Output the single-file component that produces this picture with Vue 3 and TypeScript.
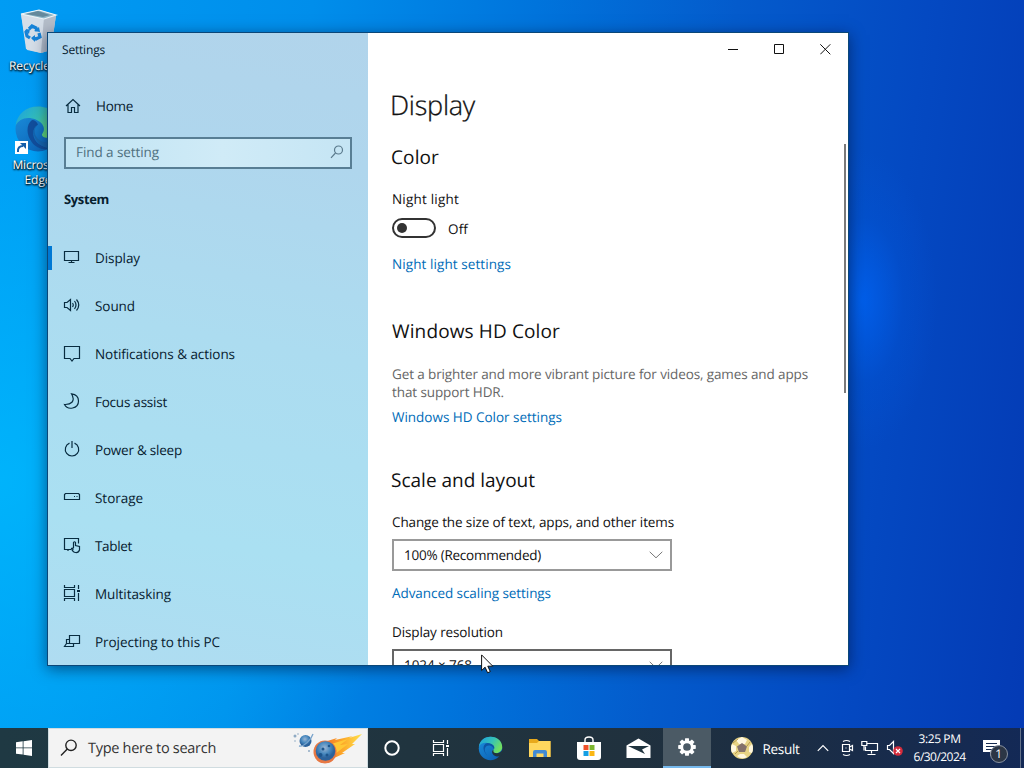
<script setup lang="ts">
interface NavItem {
  id: string
  label: string
  width: number
}

const navItems: NavItem[] = [
  { id: 'display', label: 'Display', width: 45 },
  { id: 'sound', label: 'Sound', width: 40 },
  { id: 'notifications', label: 'Notifications & actions', width: 140 },
  { id: 'focus', label: 'Focus assist', width: 72 },
  { id: 'power', label: 'Power & sleep', width: 87 },
  { id: 'storage', label: 'Storage', width: 48 },
  { id: 'tablet', label: 'Tablet', width: 37 },
  { id: 'multitasking', label: 'Multitasking', width: 76 },
  { id: 'projecting', label: 'Projecting to this PC', width: 125 },
]

// Tracks a single-line label in or out until it fills its design width.
const vFit = {
  mounted(el: HTMLElement, binding: { value: number }) {
    const natural = el.getBoundingClientRect().width
    const count = (el.textContent ?? '').trim().length
    el.style.letterSpacing = `${(binding.value - natural) / count}px`
  },
}
</script>

<template>
  <div class="desktop">
    <div class="shortcut bin">
      <svg width="48" height="48" viewBox="0 0 48 48">
        <path d="M9 6 28 2 44 7 39 42 29 45 15 42Z" fill="#c9d7e2" />
        <path d="M9 6 32 10 29 45 14 41Z" fill="#d5dee8" />
        <path d="M32 10 44 7 39 42 29 45Z" fill="#b4bdc9" />
        <path d="M9 6 27 2 44 7 32 11Z" fill="#8eb6c8" stroke="#eef5f8" stroke-width="1.2" />
        <path d="m14 6 12-3 12 4-7 2Z" fill="#64899c" />
        <path d="m17 21 3-3 4 2 1 3M27 25l1 4-4 2-3-1M18 30l-3-2-1-4 2-2" fill="none" stroke="#1683d8" stroke-width="3.2" />
        <path d="m22 23 6 1-1-5ZM23 27l-4 3 4 4ZM13 22l5-1-1 5Z" fill="#1683d8" />
      </svg>
      <span v-fit="62">Recycle Bin</span>
    </div>
    <div class="shortcut edge">
      <svg width="48" height="48" viewBox="0 0 32 32">
        <defs>
          <linearGradient id="edge-top" x1="0" y1="0" x2="1" y2="0.5">
            <stop offset="0" stop-color="#1a9fe0" /><stop offset="0.55" stop-color="#35c1b9" /><stop offset="1" stop-color="#70df61" />
          </linearGradient>
          <linearGradient id="edge-body" x1="0" y1="0" x2="0.7" y2="1">
            <stop offset="0" stop-color="#1c91de" /><stop offset="1" stop-color="#0c62b5" />
          </linearGradient>
        </defs>
        <circle cx="16" cy="16" r="15" fill="url(#edge-body)" />
        <path d="M1 14C2 6 8 1 16 1c9 0 15 6 15 13 0 5-4 8-8 8-4 0-5-2-4-3 3-4-1-9-7-10C7 8 3 10 1 14Z" fill="url(#edge-top)" />
        <path d="M12 10c-4 3-4 10 0 15 3 4 9 6 13 3-8 1-13-5-12-10 0-3 2-4 3-5-1-2-2-3-4-3Z" fill="#114e9c" />
        <path d="M16 13c-5 4-1 12 6 12 3 0 6-1 8-2-1 3-3 5-5 6-5 0-11-4-12-10 0-3 1-5 3-6Z" fill="#1565ae" />
      </svg>
      <svg class="arrow-badge" width="13" height="13" viewBox="0 0 13 13">
        <path d="M0 0h13v13H0z" fill="#fff" />
        <path d="M3 11c-.5-4 1.500-6 5-6" fill="none" stroke="#155da8" stroke-width="2" />
        <path d="M5 2h6v6Z" fill="#155da8" />
      </svg>
      <span v-fit="51">Microsoft</span>
      <span v-fit="27">Edge</span>
    </div>

    <section class="window">
      <aside class="sidebar">
        <div class="window-title"><span v-fit="43">Settings</span></div>
        <div class="home">
          <svg class="icon" width="16" height="16" viewBox="0 0 16 16">
            <path d="M1 8 8 1.500 15 8M3 6.500v8h3.500v-5h3v5H13v-8" />
          </svg>
          <span v-fit="37">Home</span>
        </div>
        <div class="find">
          <span v-fit="83">Find a setting</span>
          <svg class="icon" width="14" height="14" viewBox="0 0 14 14">
            <circle cx="8.500" cy="5" r="4" /><path d="M5.500 8 1 12.800" />
          </svg>
        </div>
        <div class="category"><span v-fit="45">System</span></div>
        <nav>
          <div v-for="item in navItems" :key="item.id" class="nav-item" :class="{ active: item.id === 'display' }">
            <svg class="icon" width="18" height="18" viewBox="0 0 18 18">
              <path v-if="item.id === 'display'" d="M1.500 3.500h14v9h-14zM8.500 12.500v2M5.500 14.500h6" />
              <g v-else-if="item.id === 'sound'">
                <path d="M1.500 6.500H4l3.500-3v11L4 11.500H1.500zM9.500 7q1.500 2 0 4M11.500 5q3 4 0 8M13.500 3.500q4.500 5.500 0 11" />
              </g>
              <path v-else-if="item.id === 'notifications'" d="M1.500 2.500h15v12H11L9 17l-2-2.500H1.500z" />
              <path v-else-if="item.id === 'focus'" d="M8.500 1.800c4.500 8-1 11-7 10.700 3 6 14 4.500 14-3.500 0-4-3-6.700-7-7.200Z" />
              <path v-else-if="item.id === 'power'" d="M9 1v7M6.500 3.100a6.700 6.700 0 1 0 5 0" />
              <path v-else-if="item.id === 'storage'" d="M2.500 5.500h13l1 1v5h-15v-5zM11 8.500h1M13.500 8.500h1" />
              <g v-else-if="item.id === 'tablet'">
                <path d="M8 13.500H1.500v-11h14v5M5 13.500v1.500" />
                <path d="M10.500 12V6.500q1-1.500 2 0v3l4 1v3.500q-1 3-4 2.500-2.500 0-4-4 1-1 2 1" />
              </g>
              <g v-else-if="item.id === 'multitasking'">
                <path d="M1.500 1v2.500h10V1M1.500 5.500h10v7h-10zM1.500 17v-2.500h10V17M15.500 1v4M15.500 9v8" />
                <path d="M14 6h3v2h-3z" class="solid" />
              </g>
              <path v-else d="M6.500 3.500h10v8h-10zM6.500 7.500h-3v4h7M3.500 11.500l-2 3h9v-3" />
            </svg>
            <span v-fit="item.width">{{ item.label }}</span>
          </div>
        </nav>
      </aside>

      <main class="content">
        <div class="window-controls">
          <svg width="11" height="11" viewBox="0 0 11 11"><path d="M0 5.500h10" /></svg>
          <svg width="11" height="11" viewBox="0 0 11 11"><path d="M.5.5h9v9h-9z" /></svg>
          <svg width="11" height="11" viewBox="0 0 11 11"><path d="m.3.300 10 10M10.300.300l-10 10" /></svg>
        </div>
        <div class="page">
          <h1><span v-fit="85">Display</span></h1>
          <h2 class="color"><span v-fit="48">Color</span></h2>
          <p class="label-night"><span v-fit="67">Night light</span></p>
          <div class="switch-row">
            <div class="switch"><i></i></div>
            <span v-fit="20">Off</span>
          </div>
          <p class="link link-night"><span v-fit="119">Night light settings</span></p>
          <h2 class="hd"><span v-fit="168">Windows HD Color</span></h2>
          <p class="muted"><span v-fit="416">Get a brighter and more vibrant picture for videos, games and apps</span></p>
          <p class="muted"><span v-fit="112">that support HDR.</span></p>
          <p class="link link-hd"><span v-fit="170">Windows HD Color settings</span></p>
          <h2 class="scale"><span v-fit="144">Scale and layout</span></h2>
          <p class="label-size"><span v-fit="282">Change the size of text, apps, and other items</span></p>
          <div class="select">
            <span v-fit="137">100% (Recommended)</span>
            <svg width="14" height="8" viewBox="0 0 14 8"><path d="m.7.800 6.300 6 6.300-6" /></svg>
          </div>
          <p class="link link-scaling"><span v-fit="159">Advanced scaling settings</span></p>
          <p class="label-resolution"><span v-fit="111">Display resolution</span></p>
          <div class="select focused">
            <span v-fit="68">1024 × 768</span>
            <svg width="14" height="8" viewBox="0 0 14 8"><path d="m.7.800 6.300 6 6.300-6" /></svg>
          </div>
        </div>
        <div class="scrollbar"></div>
      </main>
    </section>

    <svg class="cursor" width="13" height="20" viewBox="0 0 13 20">
      <path d="M.6.900v15.600l3.500-3.300 2.500 5.600 2.700-1.200-2.500-5.400h5Z" fill="#fff" stroke="#111" />
    </svg>

    <footer class="taskbar">
      <div class="start">
        <svg width="16" height="16" viewBox="0 0 16 16">
          <path d="M0 2.300 6.700 1.300v6.200H0zM7.500 1.200 16 0v7.500H7.500zM0 8.300h6.700v6.300L0 13.700zM7.500 8.300H16V16l-8.500-1.200z" fill="#fff" />
        </svg>
      </div>
      <div class="search">
        <svg width="18" height="18" viewBox="0 0 18 18">
          <circle cx="11" cy="6.300" r="5.200" fill="none" stroke="#222" stroke-width="1.400" /><path d="M7.300 10 1 16.500" stroke="#222" stroke-width="1.400" />
        </svg>
        <span v-fit="128">Type here to search</span>
        <svg class="comet" width="74" height="38" viewBox="0 0 74 38">
          <defs>
            <linearGradient id="flame" x1="0" x2="1"><stop offset="0" stop-color="#ef6a2b" /><stop offset="0.500" stop-color="#fca528" /><stop offset="1" stop-color="#ffe34d" /></linearGradient>
            <radialGradient id="rock" cx=".45" cy=".35"><stop offset="0" stop-color="#9bb6d4" /><stop offset="0.600" stop-color="#4788be" /><stop offset="1" stop-color="#2c629b" /></radialGradient>
          </defs>
          <path d="M28 14 44 9l-2 2 18-4-4 2 13-4-10 10 3 0-13 9 3 0-13 6-8 4Z" fill="url(#flame)" />
          <path d="m38 15 17-5-8 6 8-1-13 10Z" fill="#ffc735" />
          <circle cx="32" cy="23" r="11.500" fill="#e77843" />
          <circle cx="32.500" cy="22" r="9.800" fill="url(#rock)" />
          <g fill="#1e568d"><circle cx="27.500" cy="26" r="2" /><circle cx="34" cy="26" r="1.500" /><circle cx="30" cy="20" r="1.500" /><circle cx="36" cy="17" r="1.300" /></g>
          <circle cx="12.500" cy="12" r="6" fill="url(#rock)" />
          <path d="M6 17C11 18 18 11 20 5" fill="none" stroke="#7aa4cb" stroke-width="1.300" />
          <g fill="#8faac3"><circle cx="2" cy="7" r="1.500" /><circle cx="5" cy="5" r=".8" /><circle cx="2" cy="12" r=".8" /><circle cx="16" cy="22" r="1" /></g>
        </svg>
      </div>
      <div class="task">
        <svg width="18" height="18" viewBox="0 0 18 18"><circle cx="9" cy="9" r="6.700" fill="none" stroke="#fff" stroke-width="2" /></svg>
      </div>
      <div class="task">
        <svg class="icon light" width="18" height="18" viewBox="0 0 18 18">
          <path d="M1.500 1v2.500h10V1M1.500 5.500h10v7h-10zM1.500 17v-2.500h10V17M15.500 1v4M15.500 9v8" />
          <path d="M14 6h3v2h-3z" class="solid" />
        </svg>
      </div>
      <div class="task">
        <svg width="25" height="25" viewBox="0 0 32 32">
          <circle cx="16" cy="16" r="15" fill="url(#edge-body)" />
          <path d="M1 14C2 6 8 1 16 1c9 0 15 6 15 13 0 5-4 8-8 8-4 0-5-2-4-3 3-4-1-9-7-10C7 8 3 10 1 14Z" fill="url(#edge-top)" />
          <path d="M20 18c3-4-1-9-8-9-8 2-5 12 0 16-6-7-3-13 2-13 3 0 6 2 6 6Z" fill="#0d56a6" />
          <path d="M20 18c-1 3 1 4 4 4 3 0 5-1 7-4v5l-1 2c-5 3-12 0-12-5 0-1 1-2 2-2Z" fill="#20343f" />
        </svg>
      </div>
      <div class="task">
        <svg width="22" height="20" viewBox="0 0 22 20">
          <path d="M0 1h8l2 2h11.500v16H0z" fill="#e8a91c" />
          <path d="M0 5h8l2-2h11.500v16H0z" fill="#ffd75e" />
          <path d="M4 19v-5q0-2 2-2h10q2 0 2 2v5h-3.500v-3.500h-7V19z" fill="#438bd3" />
        </svg>
      </div>
      <div class="task">
        <svg width="24" height="25" viewBox="0 0 24 25">
          <path d="M8 7V4q0-3 4-3t4 3v3" fill="none" stroke="#fff" stroke-width="1.400" />
          <path d="M0 6h24v15q0 3-3 3H3q-3 0-3-3z" fill="#fff" />
          <path d="M6.500 9h5v5h-5z" fill="#f0512a" /><path d="M12.500 9h5v5h-5z" fill="#7db72f" />
          <path d="M6.500 15h5v5h-5z" fill="#159fe4" /><path d="M12.500 15h5v5h-5z" fill="#fbb713" />
        </svg>
      </div>
      <div class="task">
        <svg width="25" height="21" viewBox="0 0 25 21">
          <path d="M.5 7.500 12.500.500l12 7V20H.5z" fill="#fff" /><path d="M2 8h21l-7 3.500 3 4.500Z" fill="#20343f" />
        </svg>
      </div>
      <div class="task current">
        <svg width="20" height="20" viewBox="0 0 20 20">
          <g fill="#fff"><path v-for="n in 8" :key="n" d="M8.200 1.200h3.600l.6 4H7.600z" :transform="`rotate(${n * 45} 10 10)`" /></g>
          <circle cx="10" cy="10" r="5.200" fill="none" stroke="#fff" stroke-width="2.700" />
        </svg>
      </div>
      <div class="news">
        <svg width="24" height="24" viewBox="0 0 24 24">
          <circle cx="12" cy="12" r="11" fill="#e7d385" />
          <path d="m12 1 5 3-2 4H9L6 4ZM2 8l4 2v5l-4 2Q0 12 2 8ZM22 8l-3 3v5l3 1q2-5 0-9ZM7 20l3-2h4l3 3q-5 3-10-1Z" fill="#fff7df" />
          <path d="m12 7 5 3.500-2 5.500H9l-2-5.500Z" fill="#84716b" /><path d="M8 3 3 7M20 6l-3 4M5 18l3-3" stroke="#b99b4d" />
        </svg>
        <span v-fit="37">Result</span>
      </div>
      <div class="tray">
        <svg class="icon light chevron" width="12" height="8" viewBox="0 0 12 8"><path d="m.8 6.800 5.200-5.300 5.200 5.300" /></svg>
        <svg class="icon light" width="14" height="18" viewBox="0 0 14 18">
          <path d="M2.500 5.500h7v7h-7zM9.500 8l3-1.500v5l-3-1.500M3 2.500q3.500-2 7 0M3 15.500q3.500 2 7 0" /><path d="M5.500 8.500h1v1h-1z" class="solid" />
        </svg>
        <svg class="icon light" width="18" height="16" viewBox="0 0 18 16">
          <path d="M6 3.500h10.500v7H4.500V6.500M10.500 10.500v3M6.500 14.500h8M.8 1.500h5v4h-5zM3 5.500v5" />
        </svg>
        <svg class="icon light" width="18" height="18" viewBox="0 0 18 18">
          <path d="M1.500 6.500h2l4-4v12l-4-4h-2z" /><circle cx="12" cy="12" r="4.800" class="mute" /><path d="m10 10 4 4m0-4-4 4" />
        </svg>
      </div>
      <div class="clock">
        <div><span v-fit="42">3:25 PM</span></div>
        <div><span v-fit="52">6/30/2024</span></div>
      </div>
      <div class="action-center">
        <svg width="18" height="17" viewBox="0 0 18 17">
          <path d="M0 0h17v12h-6l-4 4v-4H0z" fill="#fff" /><path d="M3 3.500h11M3 6.500h11M3 9.500h7" stroke="#172c50" />
        </svg>
        <b>1</b>
      </div>
      <div class="show-desktop"></div>
    </footer>
  </div>
</template>

<style>
html,
body {
  margin: 0;
  overflow: hidden;
}
</style>

<style scoped>
* {
  box-sizing: border-box;
}

.desktop {
  position: relative;
  width: 1024px;
  height: 768px;
  overflow: hidden;
  font-family: 'Open Sans', 'Noto Sans', sans-serif;
  font-size: 13.5px;
  line-height: 18px;
  color: #111;
  text-rendering: geometricPrecision;
  background:
    radial-gradient(ellipse 75px 150px at 862px 300px, rgba(0, 100, 245, 0.75), rgba(0, 90, 225, 0.25) 55%, transparent),
    radial-gradient(ellipse 420px 420px at 0 480px, rgba(0, 190, 255, 0.7), transparent),
    linear-gradient(97deg, #009cf4 0%, #008eeb 28%, #0074dc 48%, #045bcc 66%, #0449c2 83%, #043ab4 100%);
}

span {
  display: inline-block;
  white-space: nowrap;
}

.icon {
  flex: none;
  fill: none;
  stroke: #082c40;
  stroke-width: 1.2;
}

.icon .solid {
  fill: #082c40;
  stroke: none;
}

.icon.light {
  stroke: #fff;
}

.icon.light .solid {
  fill: #fff;
}

.shortcut {
  position: absolute;
  left: 0;
  width: 76px;
  display: flex;
  flex-direction: column;
  align-items: center;
  color: #fff;
  font-size: 12px;
  line-height: 15px;
  text-shadow: 1px 1px 2px #000, 0 1px 2px #000;
}

.bin {
  top: 8px;
  left: 2px;
}

.bin svg {
  margin-left: -9px;
}

.bin span {
  margin-top: 2px;
}

.edge {
  top: 105px;
}

.edge span:first-of-type {
  margin-top: 4px;
}

.arrow-badge {
  position: absolute;
  left: 15px;
  top: 36px;
}

.window {
  position: absolute;
  left: 47px;
  top: 32px;
  width: 802px;
  height: 634px;
  display: flex;
  border: 1px solid #0b4778;
  background: #fff;
  box-shadow: 0 3px 14px rgba(0, 15, 45, 0.55);
}

.sidebar {
  width: 320px;
  height: 632px;
  overflow: hidden;
  color: #07202f;
  background: linear-gradient(190deg, #b1d4eb 0%, #afd6ed 20%, #acdcf0 48%, #aae0f2 78%, #afdcf1 100%);
}

.window-title {
  height: 32px;
  padding: 8px 14px;
  font-size: 12px;
}

.home {
  display: flex;
  align-items: center;
  gap: 15px;
  height: 48px;
  margin-top: 17px;
  padding-left: 17px;
}

.find {
  display: flex;
  align-items: center;
  justify-content: space-between;
  width: 288px;
  height: 32px;
  margin: 7px 16px 0;
  padding: 0 6px 2px 10px;
  border: 2px solid #587e94;
  background: linear-gradient(90deg, #bfe3f3, #d0ebf7 55%, #c5e5f4);
  color: #4f707f;
}

.find .icon {
  stroke: #5b7b8d;
}

.category {
  height: 65px;
  padding: 21px 16px 0;
  font-weight: 700;
  font-size: 13px;
}

.nav-item {
  display: flex;
  align-items: center;
  gap: 14px;
  height: 48px;
  padding-left: 15px;
}

.nav-item .icon {
  margin-top: -2px;
}

.nav-item.active {
  background: linear-gradient(#0078d4, #0078d4) left center / 4px 24px no-repeat;
}

.content {
  display: flex;
  flex-wrap: wrap;
  align-content: flex-start;
  width: 480px;
  height: 632px;
  overflow: hidden;
}

.window-controls {
  display: flex;
  justify-content: flex-end;
  gap: 35px;
  width: 480px;
  height: 32px;
  padding: 11px 17px 0 0;
  fill: none;
  stroke: #111;
}

.page {
  width: 470px;
  height: 600px;
  padding-left: 24px;
}

h1,
h2,
p {
  margin: 0;
}

h1 {
  height: 40px;
  margin: 20px 0 0 -2px;
  font-size: 27px;
  line-height: 40px;
  font-weight: 300;
  -webkit-text-stroke: 0.3px #111;
}

h2 {
  height: 28px;
  font-size: 19px;
  line-height: 28px;
  font-weight: 400;
}

h2.color {
  margin: 18px 0 0 -1px;
}

.label-night {
  margin-top: 19px;
}

.switch-row {
  display: flex;
  align-items: center;
  gap: 12px;
  height: 20px;
  margin-top: 10px;
}

.switch-row span {
  padding-top: 2px;
}

.switch {
  width: 44px;
  height: 20px;
  padding: 3px;
  border: 2px solid #333;
  border-radius: 10px;
}

.switch i {
  display: block;
  width: 10px;
  height: 10px;
  border-radius: 50%;
  background: #333;
}

.link {
  color: #006cb8;
}

.link-night {
  margin-top: 17px;
}

h2.hd {
  margin-top: 44px;
}

.hd + .muted {
  margin-top: 20px;
}

.muted {
  color: #666;
}

.link-hd {
  margin-top: 7px;
}

h2.scale {
  margin: 40px 0 0 -1px;
}

.label-size {
  margin-top: 19px;
}

.select {
  display: flex;
  align-items: center;
  justify-content: space-between;
  width: 280px;
  height: 32px;
  margin-top: 8px;
  padding: 0 7px 0 10px;
  border: 2px solid #999;
}

.select svg {
  fill: none;
  stroke: #777;
}

.focused {
  border-color: #666;
}

.link-scaling {
  margin-top: 13px;
}

.label-resolution {
  margin-top: 21px;
}

.scrollbar {
  width: 2px;
  height: 249px;
  margin: 79px 0 0 6px;
  background: #7a7a7a;
}

.cursor {
  position: absolute;
  left: 481px;
  top: 654px;
}

.taskbar {
  position: absolute;
  left: 0;
  bottom: 0;
  display: flex;
  width: 1024px;
  height: 40px;
  color: #fff;
  background: linear-gradient(90deg, #1f3943 0%, #20343f 40%, #20313e 62%, #1b2d45 78%, #132956 100%);
}

.start,
.task {
  display: flex;
  flex: none;
  align-items: center;
  justify-content: center;
  width: 49.1px;
}

.start {
  width: 48px;
}

.search + .task,
.search + .task + .task {
  padding-right: 2px;
}

.current {
  width: 48px;
  background: #4b5a65;
  border-bottom: 2px solid #76b9ed;
}

.search {
  display: flex;
  align-items: center;
  flex: none;
  width: 320px;
  padding-left: 11px;
  border: 1px solid #d0dce0;
  background: #f3f3f3;
  color: #333;
  font-size: 14.5px;
}

.search span {
  margin-left: 10px;
  padding-top: 2px;
}

.comet {
  margin-left: 77px;
}

.news {
  display: flex;
  flex: none;
  align-items: center;
  gap: 9px;
  width: 86px;
  margin-left: 19px;
}

.news span {
  padding-top: 2px;
}

.tray {
  display: flex;
  flex: none;
  align-items: center;
  gap: 7px;
  width: 96px;
  padding-left: 1px;
}

.chevron {
  margin-right: 4px;
}

.mute {
  fill: #d52c3c;
  stroke: none;
}

.clock {
  width: 56px;
  padding-top: 2px;
  text-align: center;
  font-size: 12px;
}

.action-center {
  position: relative;
  width: 52px;
  padding: 12px 0 0 15px;
}

.action-center b {
  position: absolute;
  left: 22px;
  top: 17px;
  width: 18px;
  height: 18px;
  border: 1px solid #8992a0;
  border-radius: 50%;
  background: #2c3645;
  text-align: center;
  font-size: 12px;
  line-height: 16px;
  font-weight: 400;
}

.show-desktop {
  width: 1px;
  background: #63718a;
}
</style>
